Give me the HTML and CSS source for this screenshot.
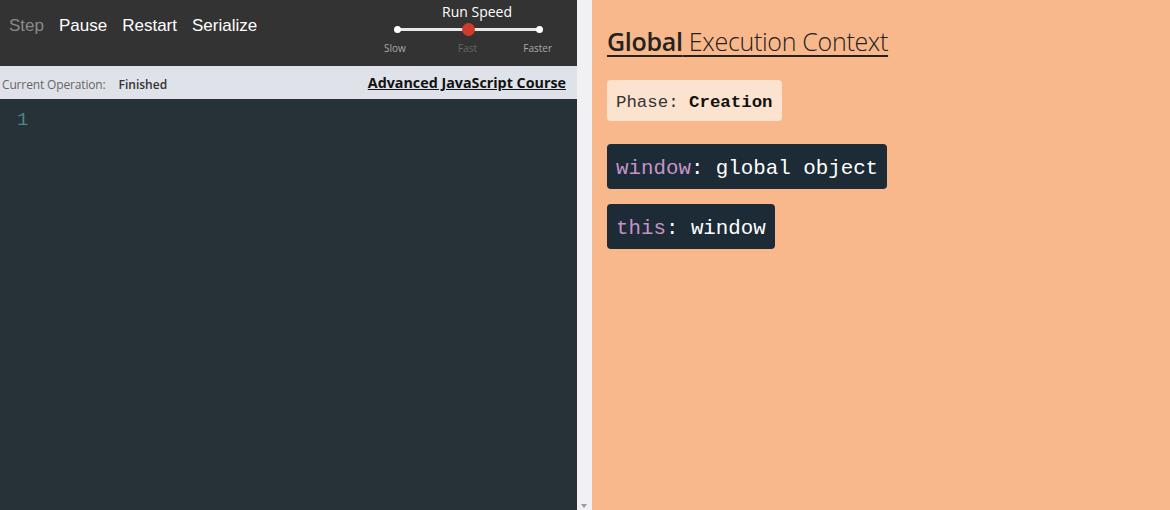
FILE: index.html
```html
<!DOCTYPE html>
<html>
<head>
<meta charset="utf-8">
<link rel="stylesheet" href="styles.css">
</head>
<body>
<div class="app">
  <div class="left">
    <div class="toolbar">
      <div class="buttons">
        <span class="btn disabled">Step</span>
        <span class="btn">Pause</span>
        <span class="btn">Restart</span>
        <span class="btn">Serialize</span>
      </div>
      <div class="speed">
        <div class="speed-title">Run Speed</div>
        <div class="track">
          <span class="dot"></span>
          <span class="thumb"></span>
          <span class="dot"></span>
        </div>
        <div class="labels">
          <span>Slow</span><span class="dim">Fast</span><span>Faster</span>
        </div>
      </div>
    </div>
    <div class="statusbar">
      <div class="op"><span class="op-label">Current Operation:</span><span class="op-value">Finished</span></div>
      <a class="course">Advanced JavaScript Course</a>
    </div>
    <div class="editor">
      <div class="gutter">1</div>
    </div>
  </div>
  <div class="scrollbar">
    <span class="arrow"></span>
  </div>
  <div class="right">
    <h1 class="title"><span class="bold">Global</span> Execution Context</h1>
    <div class="phase">Phase: <b>Creation</b></div>
    <div class="var"><span class="kw">window</span>: global object</div>
    <div class="var"><span class="kw">this</span>: window</div>
  </div>
</div>
</body>
</html>
```
FILE: styles.css
```css
html, body { margin: 0; padding: 0; }
body { width: 1170px; height: 510px; overflow: hidden; }
.app { display: flex; height: 510px; }
.left { width: 577px; display: flex; flex-direction: column; background: #263238; }
.toolbar { height: 66px; background: #333333; display: flex; justify-content: space-between; }
.buttons { display: flex; gap: 15px; padding-left: 9px; padding-top: 16px; font-family: "Liberation Sans", Arial, sans-serif; font-size: 17px; color: #fff; }
.btn.disabled { color: #8a8a8a; }
.speed { width: 168px; margin-right: 25px; display: flex; flex-direction: column; align-items: center; font-family: "Open Sans", sans-serif; }
.speed-title { color: #fff; font-size: 14px; margin-top: 3px; line-height: 18px; padding-left: 18px; }
.track { width: 143px; height: 3px; background: #e8e8e8; margin-top: 7px; display: flex; justify-content: space-between; align-items: center; }
.dot { width: 7px; height: 7px; border-radius: 50%; background: #fff; margin: 0 -3px; }
.thumb { width: 13px; height: 13px; border-radius: 50%; background: #d13b2c; }
.labels { width: 168px; display: flex; justify-content: space-between; font-size: 10px; color: #aaa; margin-top: 10px; box-sizing: border-box; }
.labels .dim { color: #666; margin-left: 6px; }
.statusbar { height: 33px; background: #dfe2e8; display: flex; justify-content: space-between; align-items: center; padding: 0 11px 0 2px; font-family: "Open Sans", sans-serif; }
.op-label { font-size: 12px; color: #666; margin-right: 13px; letter-spacing: -0.15px; }
.op-value { font-size: 12px; color: #333; font-weight: 600; }
.course { font-size: 14.3px; font-weight: 700; color: #111; text-decoration: underline; }
.editor { flex: 1; display: flex; }
.gutter { width: 30px; padding-left: 17px; padding-top: 10px; box-sizing: border-box; font-family: "Liberation Mono", monospace; font-size: 19px; color: #4f8585; }
.scrollbar { width: 15px; background: #f1f1f3; position: relative; }
.arrow { position: absolute; bottom: 2px; left: 4px; width: 0; height: 0; border-left: 3px solid transparent; border-right: 3px solid transparent; border-top: 4px solid #999; }
.right { flex: 1; background: #f8b88b; padding: 24px 15px 0 15px; font-family: "Open Sans", sans-serif; display: flex; flex-direction: column; align-items: flex-start; }
.title { margin: 0; font-size: 25px; font-weight: 300; color: #222; text-decoration: underline; text-decoration-thickness: 2px; text-underline-offset: 4px; line-height: 34px; letter-spacing: -0.3px; }
.title .bold { font-weight: 600; }
.phase { margin-top: 22px; background: #fce3cf; border-radius: 4px; padding: 3px 9px 0; height: 41px; box-sizing: border-box; display: flex; align-items: center; font-family: "Liberation Mono", monospace; font-size: 17.4px; color: #333; white-space: pre; }
.phase b { color: #111; }
.var { margin-top: 23px; background: #1c2b35; border-radius: 4px; padding: 3px 9px 0; height: 45px; box-sizing: border-box; display: flex; align-items: center; font-family: "Liberation Mono", monospace; font-size: 20.8px; color: #fff; white-space: pre; }
.var + .var { margin-top: 15px; }
.kw { color: #c693c8; }
```
